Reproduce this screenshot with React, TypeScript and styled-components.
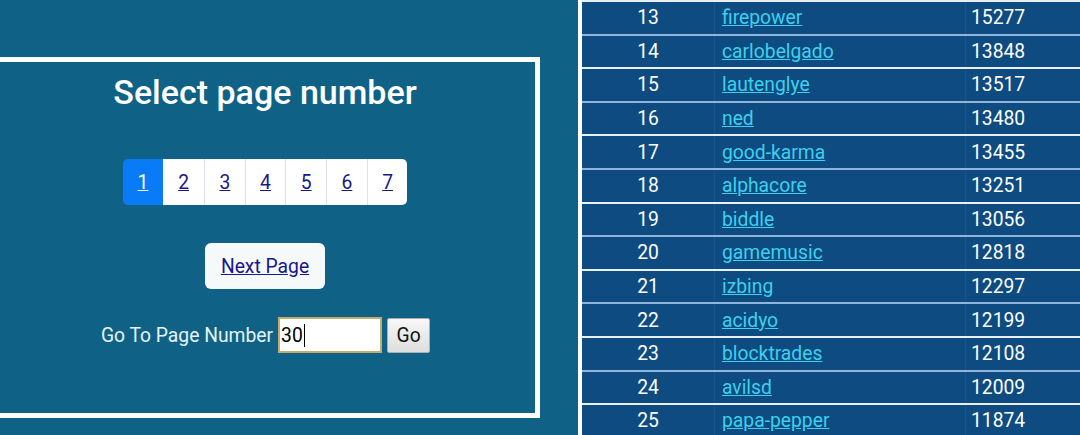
import React from "react";
import styled, { createGlobalStyle } from "styled-components";

const Global = createGlobalStyle`
  html, body { margin: 0; padding: 0; }
  body {
    background: #0f6286;
    font-family: Roboto, "Noto Sans", Arial, sans-serif;
    width: 1080px;
    height: 435px;
    overflow: hidden;
  }
`;

const Page = styled.div`
  display: flex;
  width: 1080px;
  height: 435px;
  overflow: hidden;
`;

const LeftPane = styled.div`
  width: 578px;
  flex: 0 0 578px;
`;

const Box = styled.section`
  box-sizing: border-box;
  margin: 57px 0 0 -10px;
  width: 550px;
  height: 361px;
  border: 5px solid #ffffff;
  display: flex;
  flex-direction: column;
  align-items: center;
`;

const Title = styled.h1`
  margin: 10px 0 0;
  font-size: 34px;
  line-height: 40px;
  font-weight: 500;
  color: #ffffff;
`;

const Pager = styled.ul`
  list-style: none;
  display: flex;
  margin: 47px 0 0;
  padding: 0;
  border-radius: 5px;
  overflow: hidden;
`;

const PagerItem = styled.li<{ $active?: boolean }>`
  box-sizing: border-box;
  width: 40.7px;
  height: 46px;
  display: flex;
  align-items: center;
  justify-content: center;
  background: ${(p) => (p.$active ? "#0a7bf6" : "#ffffff")};
  border-left: ${(p) => (p.$active ? "none" : "1px solid #dde2e6")};
  &:nth-child(2) { border-left: none; }
  a {
    font-size: 19.3px;
    color: ${(p) => (p.$active ? "#ffffff" : "#1a168c")};
    text-decoration: underline;
  }
`;

const NextButton = styled.a`
  margin-top: 38px;
  box-sizing: border-box;
  width: 120px;
  height: 46px;
  display: flex;
  align-items: center;
  justify-content: center;
  background: #f6f9fa;
  border-radius: 6px;
  font-size: 19.3px;
  color: #1a168c;
  text-decoration: underline;
`;

const GoRow = styled.div`
  margin-top: 28px;
  display: flex;
  align-items: center;
  margin-left: 1px;
`;

const GoLabel = styled.label`
  font-size: 19.3px;
  color: #e4f4f7;
  margin-right: 5px;
`;

const GoInput = styled.div`
  box-sizing: border-box;
  width: 104px;
  height: 36px;
  border: 2px solid #c3ad6c;
  background: #ffffff;
  display: flex;
  align-items: center;
  padding-left: 1px;
  font-size: 19.3px;
  color: #000;
`;

const Caret = styled.span`
  display: inline-block;
  width: 1px;
  height: 23px;
  background: #000;
  margin-left: 1px;
`;

const GoButton = styled.button`
  box-sizing: border-box;
  margin-left: 5px;
  width: 43px;
  height: 35px;
  border: 1px solid #a9aeb1;
  border-radius: 2px;
  background: linear-gradient(#f7f7f7, #dedede);
  font-family: Roboto, Arial, sans-serif;
  font-size: 19.3px;
  color: #111;
  padding: 0;
`;

const RightPane = styled.div`
  flex: 1;
  overflow: hidden;
  border-left: 4px solid #ffffff;
  background: #0d4b80;
`;

const Row = styled.div<{ $alt: boolean }>`
  box-sizing: border-box;
  height: 33.6px;
  display: grid;
  grid-template-columns: 132px 251px 1fr;
  border-top: 2px solid ${(p) => (p.$alt ? "#8fb5dc" : "#e9f1f8")};
  background: #0d4b80;
`;

const Cell = styled.div<{ $center?: boolean; $divider?: boolean; $pad?: number }>`
  display: flex;
  align-items: center;
  justify-content: ${(p) => (p.$center ? "center" : "flex-start")};
  padding-left: ${(p) => (p.$center ? 0 : p.$pad ?? 7)}px;
  border-left: ${(p) => (p.$divider ? "1px solid rgba(255,255,255,0.06)" : "none")};
  font-size: 19.3px;
  color: #ffffff;
`;

const NameLink = styled.a`
  color: #3dd0ee;
  text-decoration: underline;
  font-size: 19.3px;
`;

const rows: [number, string, number][] = [
  [13, "firepower", 15277],
  [14, "carlobelgado", 13848],
  [15, "lautenglye", 13517],
  [16, "ned", 13480],
  [17, "good-karma", 13455],
  [18, "alphacore", 13251],
  [19, "biddle", 13056],
  [20, "gamemusic", 12818],
  [21, "izbing", 12297],
  [22, "acidyo", 12199],
  [23, "blocktrades", 12108],
  [24, "avilsd", 12009],
  [25, "papa-pepper", 11874],
];

export default function App() {
  return (
    <>
      <Global />
      <Page>
        <LeftPane>
          <Box>
            <Title>Select page number</Title>
            <Pager>
              {[1, 2, 3, 4, 5, 6, 7].map((n) => (
                <PagerItem key={n} $active={n === 1}>
                  <a href="#">{n}</a>
                </PagerItem>
              ))}
            </Pager>
            <NextButton href="#">Next Page</NextButton>
            <GoRow>
              <GoLabel>Go To Page Number</GoLabel>
              <GoInput>
                30
                <Caret />
              </GoInput>
              <GoButton>Go</GoButton>
            </GoRow>
          </Box>
        </LeftPane>
        <RightPane>
          {rows.map(([rank, name, score]) => (
            <Row key={rank} $alt={rank % 2 === 0}>
              <Cell $center>{rank}</Cell>
              <Cell $divider>
                <NameLink href="#">{name}</NameLink>
              </Cell>
              <Cell $divider $pad={5}>{score}</Cell>
            </Row>
          ))}
        </RightPane>
      </Page>
    </>
  );
}
